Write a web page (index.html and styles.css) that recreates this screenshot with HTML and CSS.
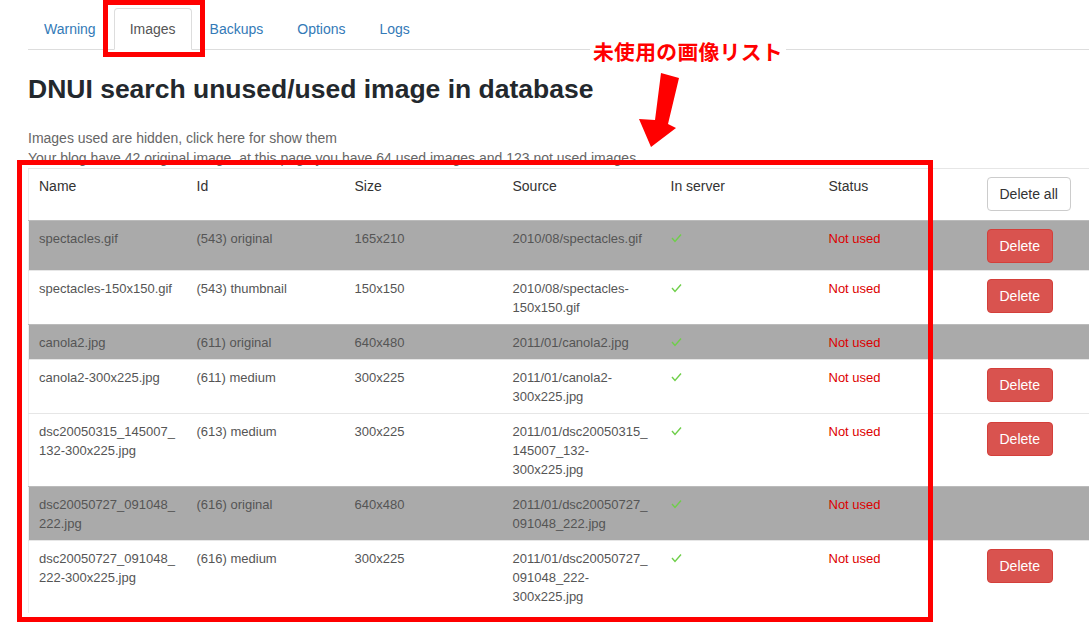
FILE: index.html
```html
<!DOCTYPE html>
<html>
<head>
<meta charset="utf-8">
<link rel="stylesheet" href="styles.css">
</head>
<body>
<div class="wrap">
  <ul class="tabs">
    <li><a>Warning</a></li>
    <li class="active"><a>Images</a></li>
    <li><a>Backups</a></li>
    <li><a>Options</a></li>
    <li><a>Logs</a></li>
  </ul>
  <h1 class="title">DNUI search unused/used image in database</h1>
  <p class="info">Images used are hidden, click here for show them<br>Your blog have 42 original image, at this page you have 64 used images and 123 not used images</p>
  <table class="list">
    <colgroup><col class="c"><col class="c"><col class="c"><col class="c"><col class="c"><col class="c"><col class="c"></colgroup>
    <thead>
      <tr><th>Name</th><th>Id</th><th>Size</th><th>Source</th><th>In server</th><th>Status</th><th><button class="btn btn-default">Delete all</button></th></tr>
    </thead>
    <tbody>
      <tr class="orig"><td>spectacles.gif</td><td>(543) original</td><td>165x210</td><td>2010/08/spectacles.gif</td><td><svg class="chk" viewBox="0 0 11 10"><path d="M1 5 L4 8.5 L10 1.5"/></svg></td><td class="nu">Not used</td><td><button class="btn btn-danger">Delete</button></td></tr>
      <tr><td>spectacles-150x150.gif</td><td>(543) thumbnail</td><td>150x150</td><td>2010/08/spectacles-150x150.gif</td><td><svg class="chk" viewBox="0 0 11 10"><path d="M1 5 L4 8.5 L10 1.5"/></svg></td><td class="nu">Not used</td><td><button class="btn btn-danger">Delete</button></td></tr>
      <tr class="orig"><td>canola2.jpg</td><td>(611) original</td><td>640x480</td><td>2011/01/canola2.jpg</td><td><svg class="chk" viewBox="0 0 11 10"><path d="M1 5 L4 8.5 L10 1.5"/></svg></td><td class="nu">Not used</td><td></td></tr>
      <tr><td>canola2-300x225.jpg</td><td>(611) medium</td><td>300x225</td><td>2011/01/canola2-300x225.jpg</td><td><svg class="chk" viewBox="0 0 11 10"><path d="M1 5 L4 8.5 L10 1.5"/></svg></td><td class="nu">Not used</td><td><button class="btn btn-danger">Delete</button></td></tr>
      <tr><td>dsc20050315_145007_132-300x225.jpg</td><td>(613) medium</td><td>300x225</td><td>2011/01/dsc20050315_145007_132-300x225.jpg</td><td><svg class="chk" viewBox="0 0 11 10"><path d="M1 5 L4 8.5 L10 1.5"/></svg></td><td class="nu">Not used</td><td><button class="btn btn-danger">Delete</button></td></tr>
      <tr class="orig"><td>dsc20050727_091048_222.jpg</td><td>(616) original</td><td>640x480</td><td>2011/01/dsc20050727_091048_222.jpg</td><td><svg class="chk" viewBox="0 0 11 10"><path d="M1 5 L4 8.5 L10 1.5"/></svg></td><td class="nu">Not used</td><td></td></tr>
      <tr><td>dsc20050727_091048_222-300x225.jpg</td><td>(616) medium</td><td>300x225</td><td>2011/01/dsc20050727_091048_222-300x225.jpg</td><td><svg class="chk" viewBox="0 0 11 10"><path d="M1 5 L4 8.5 L10 1.5"/></svg></td><td class="nu">Not used</td><td><button class="btn btn-danger">Delete</button></td></tr>
    </tbody>
  </table>
</div>
<div class="mark mark-tab"></div>
<div class="mark mark-table"></div>
<div class="note">未使用の画像リスト</div>
<svg class="arrow" viewBox="0 0 50 82"><polygon points="26,3 44,8 33,54 41,58 16,77 4,49 20,50"/></svg>
</body>
</html>
```
FILE: styles.css
```css
html, body {
  margin: 0;
  padding: 0;
  overflow: hidden;
  background: #fff;
}
body {
  font-family: "Liberation Sans", Arial, sans-serif;
  font-size: 13px;
  color: #555;
  position: relative;
  width: 1089px;
  height: 642px;
}
.wrap {
  padding-left: 28px;
  padding-top: 8px;
}
.tabs {
  list-style: none;
  margin: 0;
  padding: 0;
  display: flex;
  border-bottom: 1px solid #ddd;
}
.tabs li {
  margin-right: 2px;
  margin-bottom: -1px;
}
.tabs a {
  display: block;
  padding: 10px 15px;
  border: 1px solid transparent;
  border-radius: 4px 4px 0 0;
  font-size: 14px;
  line-height: 20px;
  color: #337ab7;
}
.tabs .active a {
  color: #555;
  background: #fff;
  border-color: #ddd #ddd transparent #ddd;
}
.title {
  margin: 22px 0 0;
  font-size: 26.5px;
  line-height: 34px;
  font-weight: bold;
  color: #23282d;
}
.info {
  margin: 23px 0 0;
  font-size: 14px;
  line-height: 19.5px;
  color: #666;
}
.list {
  margin-top: 0;
  width: 1106px;
  table-layout: fixed;
  border-collapse: collapse;
  border-left: 1px solid #eee;
}
.c {
  width: 158px;
}
.list th, .list td {
  text-align: left;
  vertical-align: top;
  padding: 8px 10px 7px;
  line-height: 19px;
  border-top: 1px solid #e6e6e6;
  overflow-wrap: break-word;
  word-wrap: break-word;
}
.list th {
  font-weight: normal;
  font-size: 14px;
  color: #333;
  padding-bottom: 9px;
}
.list tr.orig td {
  background: #aaa;
  color: #555;
  border-top-color: #bbb;
}
.list td.nu,
.list tr.orig td.nu {
  color: #d00;
}
.chk {
  width: 11px;
  height: 10px;
  margin-top: 4px;
  display: block;
}
.chk path {
  fill: none;
  stroke: #6fcf4a;
  stroke-width: 1.4;
}
.btn {
  font-family: "Liberation Sans", Arial, sans-serif;
  font-size: 14px;
  line-height: 20px;
  padding: 6px 12px;
  border: 1px solid;
  border-radius: 4px;
  display: block;
}
.btn-default {
  background: #fff;
  border-color: #ccc;
  color: #333;
}
.btn-danger {
  background: #d9534f;
  border-color: #d43f3a;
  color: #fff;
}
.mark {
  position: absolute;
  border: 5px solid #f00;
  box-sizing: border-box;
  pointer-events: none;
}
.mark-tab {
  left: 103px;
  top: 0;
  width: 102px;
  height: 57px;
}
.mark-table {
  left: 17px;
  top: 160px;
  width: 916px;
  height: 462px;
}
.note {
  position: absolute;
  left: 590px;
  top: 37px;
  padding: 0 3px;
  background: #fff;
  color: #f00;
  font-family: "Noto Sans CJK JP", sans-serif;
  font-weight: bold;
  font-size: 20.8px;
  line-height: 28px;
  letter-spacing: 0.3px;
}
.arrow {
  position: absolute;
  left: 635px;
  top: 70px;
  width: 50px;
  height: 82px;
}
.arrow polygon {
  fill: #f00;
}
```
